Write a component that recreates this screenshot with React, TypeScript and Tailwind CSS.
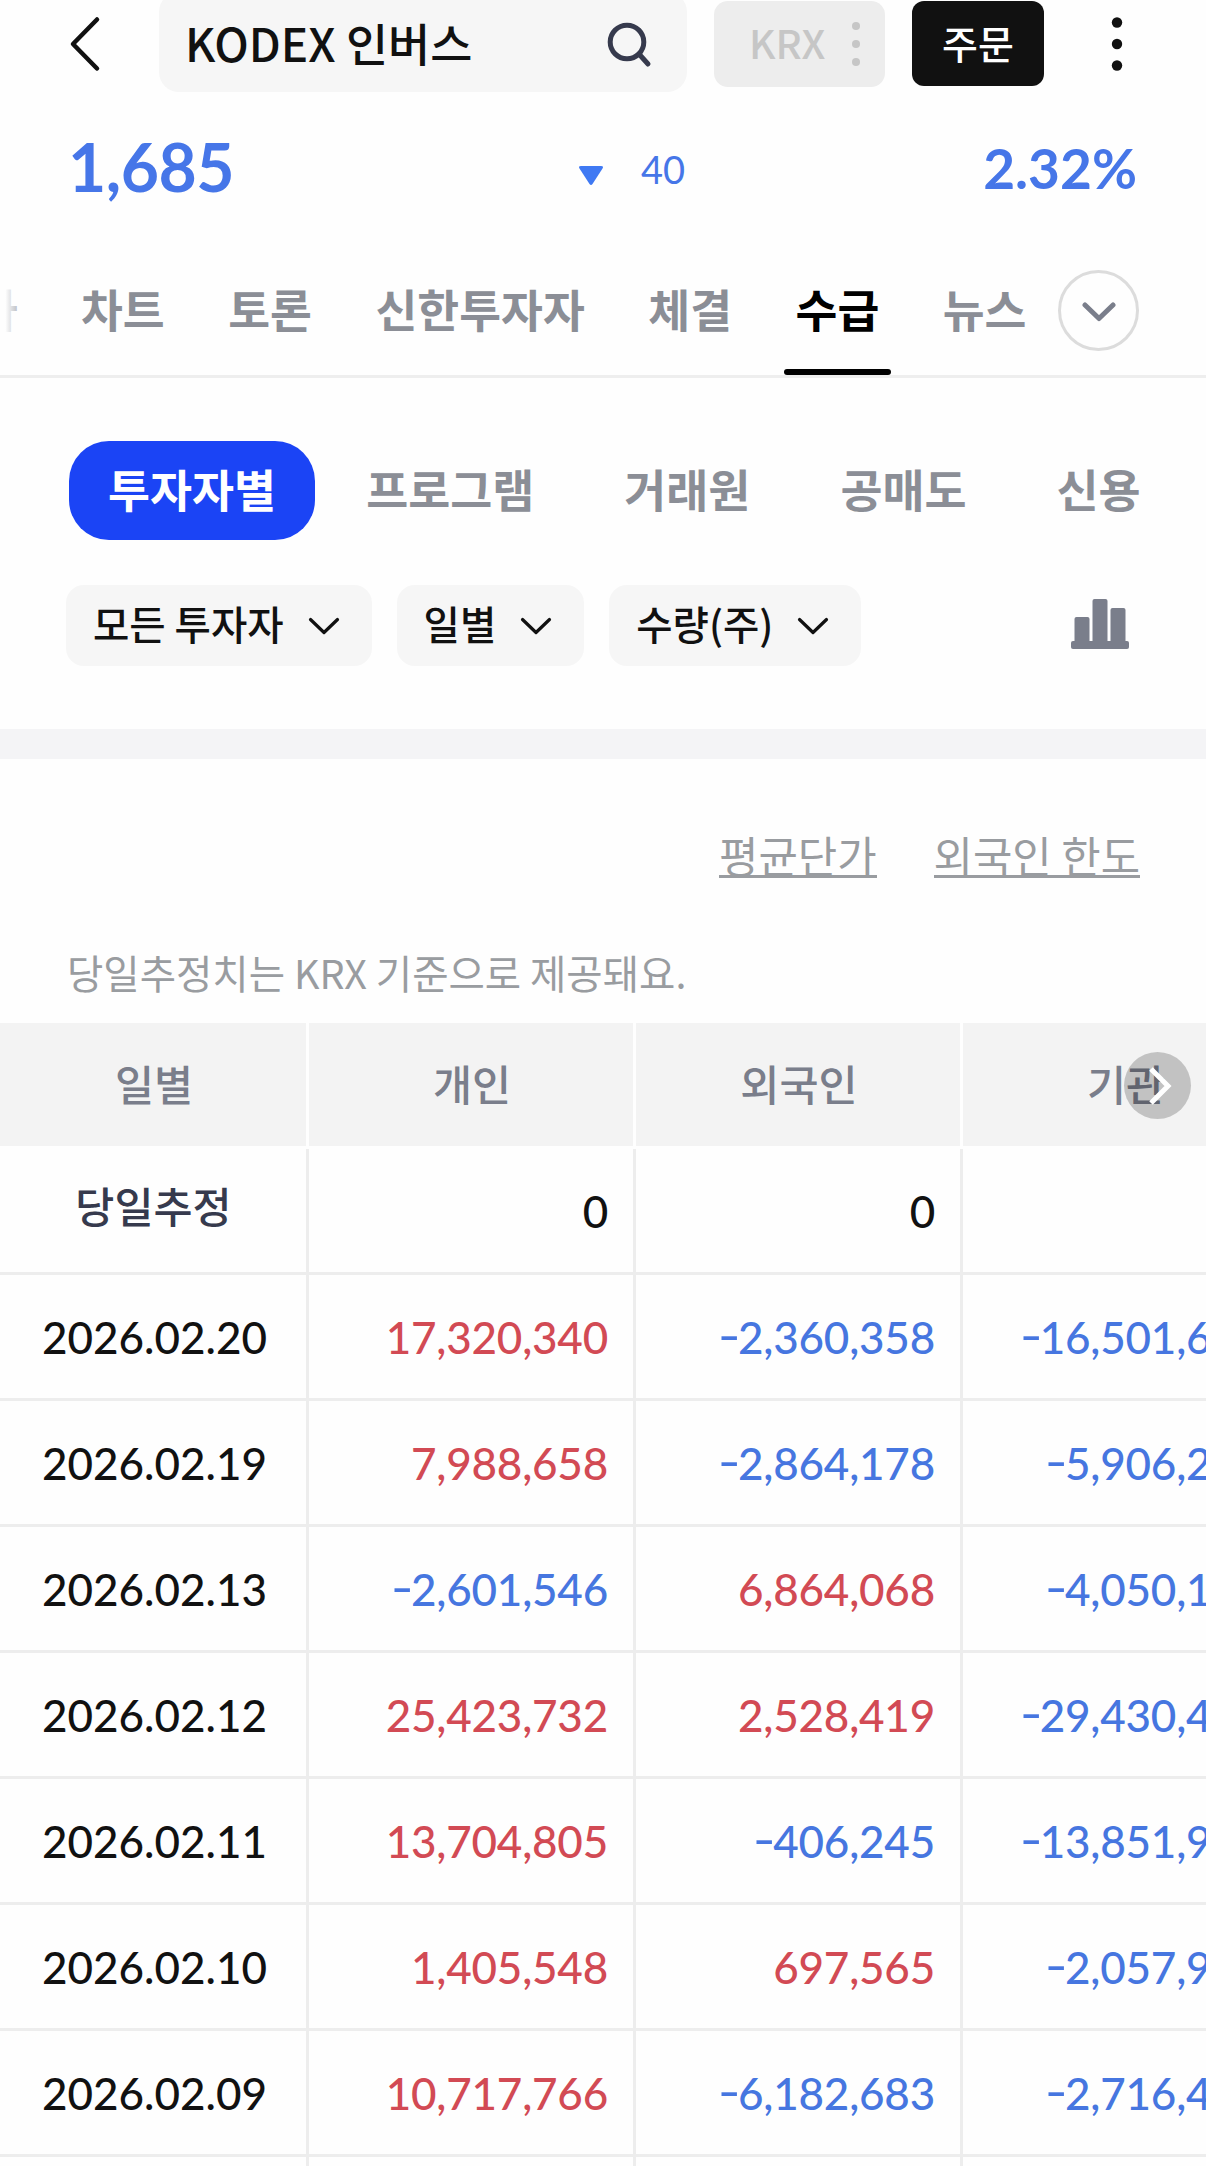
import { useState } from 'react';
import clsx from 'clsx';

const tabs = ['차트', '토론', '신한투자자', '체결', '수급', '뉴스'];
const subTabs = ['투자자별', '프로그램', '거래원', '공매도', '신용'];
const filters = ['모든 투자자', '일별', '수량(주)'];
const columns = ['개인', '외국인', '기관'];

const rows = [
  { date: '2026.02.20', values: ['17,320,340', '-2,360,358', '-16,501,642'] },
  { date: '2026.02.19', values: ['7,988,658', '-2,864,178', '-5,906,215'] },
  { date: '2026.02.13', values: ['-2,601,546', '6,864,068', '-4,050,182'] },
  { date: '2026.02.12', values: ['25,423,732', '2,528,419', '-29,430,457'] },
  { date: '2026.02.11', values: ['13,704,805', '-406,245', '-13,851,960'] },
  { date: '2026.02.10', values: ['1,405,548', '697,565', '-2,057,931'] },
  { date: '2026.02.09', values: ['10,717,766', '-6,182,683', '-2,716,408'] },
  { date: '', values: ['', '', ''] },
];

function Amount({ value }: { value: string }) {
  const negative = value.startsWith('-');
  return (
    <div
      className={clsx(
        'flex items-center justify-end border-r-3 border-b-3 border-[#ededed] pr-[25px] tracking-[-0.2px]',
        value === '0' ? 'text-[#111111]' : negative ? 'text-[#4676e0]' : 'text-[#d24a54]'
      )}
    >
      {negative && <span className="relative -top-[2px] mr-px scale-x-140">-</span>}
      <span>{negative ? value.slice(1) : value}</span>
    </div>
  );
}

function Header() {
  return (
    <header className="flex h-[92px] items-start">
      <button className="ml-[68px] mt-[15px]">
        <svg width="34" height="58" viewBox="0 0 34 58" fill="none" stroke="#111" strokeWidth="4.5" strokeLinecap="round" strokeLinejoin="round">
          <path d="M29 4.5 5 29 29 53.5" />
        </svg>
      </button>
      <div className="-mt-2 ml-[57px] flex h-[100px] w-[528px] items-center justify-between rounded-[20px] bg-[#f6f6f6] pt-2 pl-[26px] pr-[34px]">
        <span className="-mt-[6px] text-[45.800px] leading-none font-medium text-[#111111]">KODEX 인버스</span>
        <svg width="46" height="48" viewBox="0 0 46 48" fill="none" stroke="#363a4d" strokeWidth="5" strokeLinecap="round">
          <circle cx="20" cy="20" r="16.8" />
          <path d="m32 32 9 10" />
        </svg>
      </div>
      <div className="mt-px ml-[27px] flex h-[86px] w-[171px] items-center rounded-[14px] bg-[#ededed] pl-[35px]">
        <span className="-mt-[5px] w-[88px] text-[40px] leading-none font-medium text-[#c6c6c6]">KRX</span>
        <svg width="10" height="46" viewBox="0 0 10 46" fill="#c6c6c6" className="ml-[14px]">
          <circle cx="5" cy="5" r="4" />
          <circle cx="5" cy="23" r="4" />
          <circle cx="5" cy="41" r="4" />
        </svg>
      </div>
      <button className="mt-px ml-[27px] h-[85px] w-[132px] rounded-[12px] bg-[#111111] pb-[3px] text-[39px] leading-none font-medium text-white">주문</button>
      <svg width="12" height="56" viewBox="0 0 12 56" fill="#111" className="mt-4 ml-[67px]">
        <circle cx="6" cy="6.5" r="5.2" />
        <circle cx="6" cy="28" r="5.2" />
        <circle cx="6" cy="49.5" r="5.2" />
      </svg>
    </header>
  );
}

export default function App() {
  const [tab, setTab] = useState('수급');
  const [subTab, setSubTab] = useState('투자자별');

  return (
    <div className="h-[2166px] w-[1206px] overflow-hidden bg-[#fefefe] font-['Noto_Sans_CJK_KR',sans-serif]">
      <Header />

      {/* Price */}
      <div className="flex h-[150px] items-center pl-[68px] pr-[69px] font-['Lato','Noto_Sans_CJK_KR',sans-serif] leading-none text-[#4676e8]">
        <span className="w-[511px] text-[66px] font-bold tracking-[-0.5px]">1,685</span>
        <svg width="24" height="19" viewBox="0 0 24 19" className="mt-[17px]" fill="#3f79f3">
          <path d="M2 0h20q3 0 1.500 2.500L13.500 18q-1.500 2-3 0L.5 2.500Q-1 0 2 0Z" />
        </svg>
        <span className="ml-[38px] pt-[4px] text-[38px]">40</span>
        <span className="ml-auto pt-[2px] text-[55px] font-bold">2.32%</span>
      </div>

      {/* Tabs */}
      <nav className="relative flex h-[136px] items-center border-b-3 border-[#eeeeee] pl-[81px]">
        <span className="absolute -left-[24px] text-[45.5px] leading-none font-bold text-[#8b8e96]">가</span>
        <span className="absolute inset-y-0 left-0 w-[27px] bg-linear-to-r from-[#fefefe] from-20% to-transparent" />
        <div className="flex gap-[63.500px]">
          {tabs.map(t => (
            <button
              key={t}
              onClick={() => setTab(t)}
              className={clsx('relative text-[45.5px] leading-[133px] font-bold', t === tab ? 'text-black' : 'text-[#8b8e96]')}
            >
              {t}
              {t === tab && <span className="absolute -right-3 bottom-0 -left-3 h-[6px] rounded-[3px] bg-black" />}
            </button>
          ))}
        </div>
        <button className="mt-[3px] ml-[32px] flex size-[81px] items-center justify-center rounded-full border-3 border-[#dcdcdc]">
          <svg width="34" height="20" viewBox="0 0 34 20" fill="none" stroke="#7a7e8b" strokeWidth="5" strokeLinecap="round" strokeLinejoin="round" className="mt-1">
            <path d="m3 3 14 13.500L31 3" />
          </svg>
        </button>
      </nav>

      {/* Sub tabs */}
      <div className="mt-[63px] ml-[69px] flex gap-[12px]">
        {subTabs.map(t => (
          <button
            key={t}
            onClick={() => setSubTab(t)}
            className={clsx(
              'h-[99px] shrink-0 rounded-[40px] px-[39px] pb-[4px] text-[45.700px] leading-none font-bold',
              t === subTab ? 'bg-[#1b44f5] text-white' : 'text-[#8b8e96]'
            )}
          >
            {t}
          </button>
        ))}
      </div>

      {/* Filters */}
      <div className="mt-[45px] flex items-center pr-[77px] pl-[66px]">
        <div className="flex gap-[25px]">
          {filters.map(f => (
            <button key={f} className="flex h-[81px] items-center rounded-[18px] bg-[#f6f6f6] pr-[32px] pl-[27px] text-[39.500px] leading-none font-medium text-[#111111]">
              <span className="-mt-[5px]">{f}</span>
              <svg width="32" height="18" viewBox="0 0 32 18" fill="none" stroke="#111" strokeWidth="3.200" strokeLinecap="round" strokeLinejoin="round" className="ml-[24px]">
                <path d="m2.500 2.500 13.500 13 13.500-13" />
              </svg>
            </button>
          ))}
        </div>
        <svg width="58" height="50" viewBox="0 0 58 50" fill="#7a7e8b" className="-mt-[3px] ml-auto">
          <rect x="0" y="42" width="58" height="8" rx="2" />
          <rect x="3.500" y="18" width="15" height="28" rx="2" />
          <rect x="21.500" y="0" width="15" height="46" rx="2" />
          <rect x="39.500" y="9" width="15" height="37" rx="2" />
        </svg>
      </div>

      <div className="mt-[63px] h-[30px] bg-[#f4f4f6]" />

      {/* Links */}
      <div className="mt-[66px] flex h-[60px] items-center justify-end gap-[57px] pr-[66px] text-[42.800px] leading-none text-[#999ca0]">
        <a className="border-b-3 border-[#999ca0] leading-[42px]">평균단가</a>
        <a className="border-b-3 border-[#999ca0] leading-[42px]">외국인 한도</a>
      </div>
      <p className="mt-[58px] h-[80px] pl-[67px] text-[39.500px] leading-[58px] text-[#999ca0]">당일추정치는 KRX 기준으로 제공돼요.</p>

      {/* Table */}
      <div className="relative">
        <div className="grid h-[126px] w-[1290px] grid-cols-[309px_327px_327px_327px] text-[42.500px] leading-none font-medium text-[#7a7e8b]">
          {['일별', ...columns].map(c => (
            <div key={c} className="flex items-center justify-center border-r-3 border-b-3 border-[#fefefe] bg-[#f3f3f3] pb-[3px] pl-[2px]">{c}</div>
          ))}
        </div>
        <button className="absolute top-[29px] left-[1124px] flex size-[67px] items-center justify-center rounded-full bg-black/20">
          <svg width="24" height="38" viewBox="0 0 24 38" fill="none" stroke="#fff" strokeWidth="5" className="ml-1">
            <path d="m3 2 17 17L3 36" />
          </svg>
        </button>
      </div>

      <div className="grid w-[1290px] auto-rows-[126px] grid-cols-[309px_327px_327px_327px] font-['Lato','Noto_Sans_CJK_KR',sans-serif] text-[44px] leading-none font-medium">
        <div className="flex items-center justify-center border-r-3 border-b-3 border-[#ededed] pb-[10px] pl-[1px] font-['Noto_Sans_CJK_KR',sans-serif] text-[42.500px] text-[#363a4d]">당일추정</div>
        {columns.map(c => (
          <Amount key={c} value="0" />
        ))}
        {rows.map(r => (
          <div key={r.date} className="contents">
            <div className="flex items-center justify-center border-r-3 border-b-3 border-[#ededed] pl-[3px] text-[#111111]">{r.date}</div>
            {r.values.map((v, i) => (
              <Amount key={i} value={v} />
            ))}
          </div>
        ))}
      </div>
    </div>
  );
}
